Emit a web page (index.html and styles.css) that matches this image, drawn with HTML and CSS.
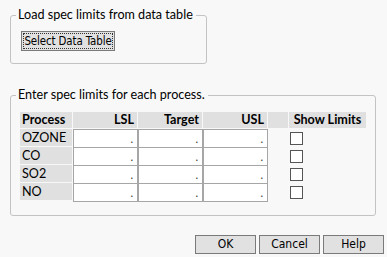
FILE: index.html
```html
<!DOCTYPE html>
<html>
<head>
<meta charset="utf-8">
<link rel="stylesheet" href="styles.css">
</head>
<body>
<div class="dialog">
  <fieldset class="group group-load">
    <legend>Load spec limits from data table</legend>
    <button class="btn btn-select"><span class="focus">Select Data Table</span></button>
  </fieldset>

  <fieldset class="group group-enter">
    <legend>Enter spec limits for each process.</legend>
    <div class="grid">
      <div class="hd hd-left">Process</div>
      <div class="hd">LSL</div>
      <div class="hd">Target</div>
      <div class="hd">USL</div>
      <div class="hd"></div>
      <div class="hd hd-center">Show Limits</div>

      <div class="lbl">OZONE</div>
      <div class="cell">.</div><div class="cell">.</div><div class="cell">.</div>
      <div class="sp"></div><div class="chk"><span class="box"></span></div>

      <div class="lbl">CO</div>
      <div class="cell">.</div><div class="cell">.</div><div class="cell">.</div>
      <div class="sp"></div><div class="chk"><span class="box"></span></div>

      <div class="lbl">SO2</div>
      <div class="cell">.</div><div class="cell">.</div><div class="cell">.</div>
      <div class="sp"></div><div class="chk"><span class="box"></span></div>

      <div class="lbl">NO</div>
      <div class="cell">.</div><div class="cell">.</div><div class="cell">.</div>
      <div class="sp"></div><div class="chk"><span class="box"></span></div>
    </div>
  </fieldset>

  <div class="actions">
    <button class="btn btn-act">OK</button>
    <button class="btn btn-act">Cancel</button>
    <button class="btn btn-act">Help</button>
  </div>
</div>
</body>
</html>
```

FILE: styles.css
```css
html, body {
  margin: 0;
  padding: 0;
  background: #f8f8f8;
}
body {
  font-family: Lato, "Open Sans", "Liberation Sans", sans-serif;
  font-size: 12px;
  color: #000;
  width: 387px;
  height: 257px;
  overflow: hidden;
}
.dialog {
  padding: 7px 0 0 10px;
  display: flex;
  flex-direction: column;
}
.group {
  margin: 0;
  border: 1px solid #c3c3c3;
  border-radius: 3px;
  padding: 0;
  min-width: 0;
}
.group legend {
  margin-left: 5px;
  padding: 0 3px 0 2px;
  line-height: 16px;
  font-size: 12.6px;
}
.group-load {
  width: 197px;
  height: 57px;
  box-sizing: border-box;
}
.group-load .btn-select {
  margin: 8px 0 0 10px;
}
.btn {
  font-family: "DejaVu Sans Condensed", "DejaVu Sans", sans-serif;
  font-size: 11px;
  background: #e1e1e1;
  border: 1px solid #adadad;
  color: #000;
  padding: 0;
  margin: 0;
  line-height: 15px;
}
.btn-select {
  width: 94px;
  height: 20px;
  padding: 1px;
  border-color: #7a7a7a;
  display: flex;
  font-size: 11.4px;
}
.btn-select .focus {
  flex: 1;
  border: 1px dotted #333;
  display: flex;
  align-items: center;
  justify-content: center;
  white-space: nowrap;
  letter-spacing: -0.1px;
}
.group-enter {
  margin-top: 23px;
  width: 366px;
  height: 129px;
  box-sizing: border-box;
}
.grid {
  margin: 9px 0 0 9px;
  display: grid;
  grid-template-columns: 52px 64px 64px 64px 20px 77px;
  grid-template-rows: 17px repeat(4, 18px);
  column-gap: 1px;
  row-gap: 0;
  width: max-content;
}
.hd {
  background: #e0e0e0;
  font-weight: 700;
  font-size: 12.6px;
  text-align: right;
  padding: 0 3px;
  line-height: 16px;
  margin-bottom: 1px;
  white-space: nowrap;
}
.hd-left { text-align: left; padding-left: 2px; }
.hd-center { text-align: center; }
.lbl {
  background: #e0e0e0;
  font-size: 12.6px;
  line-height: 17px;
  padding-left: 2px;
  margin-bottom: 1px;
}
.cell {
  background: #fff;
  border: 1px solid #a6a6a6;
  margin-right: -1px;
  margin-bottom: -1px;
  text-align: right;
  padding-right: 4px;
  line-height: 17px;
  font-size: 11px;
  color: #333;
}
.chk {
  display: flex;
  align-items: center;
  padding-left: 1px;
}
.box {
  width: 13px;
  height: 13px;
  box-sizing: border-box;
  border: 1px solid #555;
  background: #fff;
}
.actions {
  margin-top: 19px;
  display: flex;
  justify-content: flex-end;
  gap: 3px;
  padding-right: 3px;
}
.btn-act {
  width: 61px;
  height: 19px;
  border-color: #7a7a7a;
  font-size: 12px;
}
```
